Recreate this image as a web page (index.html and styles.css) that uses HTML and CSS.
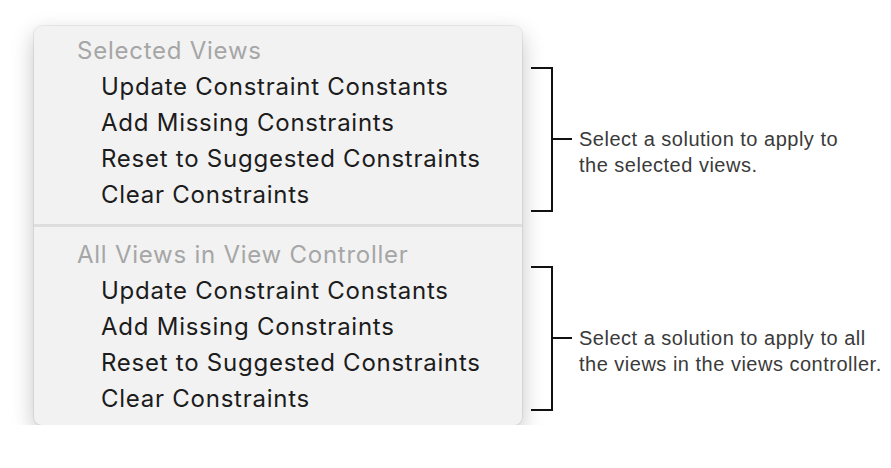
FILE: index.html
```html
<!DOCTYPE html>
<html lang="en">
<head>
    <meta charset="UTF-8">
    <meta name="viewport" content="width=device-width, initial-scale=1.0">
    <title>Resolve Auto Layout Issues</title>
    <link rel="stylesheet" href="styles.css">
</head>
<body>
    <div class="page">
        <div class="menu">
            <div class="menu-section">
                <div class="menu-header">Selected Views</div>
                <div class="menu-item">Update Constraint Constants</div>
                <div class="menu-item">Add Missing Constraints</div>
                <div class="menu-item">Reset to Suggested Constraints</div>
                <div class="menu-item">Clear Constraints</div>
            </div>
            <div class="menu-separator"></div>
            <div class="menu-section">
                <div class="menu-header">All Views in View Controller</div>
                <div class="menu-item">Update Constraint Constants</div>
                <div class="menu-item">Add Missing Constraints</div>
                <div class="menu-item">Reset to Suggested Constraints</div>
                <div class="menu-item">Clear Constraints</div>
            </div>
        </div>

        <div class="notes">
            <div class="note">
                <div class="brace"></div>
                <div class="label">
                    <div class="tick"></div>
                    <p>Select a solution to apply to<br>the selected views.</p>
                </div>
            </div>
            <div class="note">
                <div class="brace"></div>
                <div class="label">
                    <div class="tick"></div>
                    <p>Select a solution to apply to all<br>the views in the views controller.</p>
                </div>
            </div>
        </div>
    </div>
</body>
</html>
```

FILE: styles.css
```css
body {
    margin: 0;
    background: #fff;
    font-family: Inter, "Liberation Sans", sans-serif;
}

.page {
    display: flex;
    align-items: flex-start;
    padding: 26px 0 0 34px;
}

.menu {
    width: 488px;
    background: #f2f2f2;
    border-radius: 8px;
    box-shadow: 0 0 0 1px rgba(0, 0, 0, 0.06), 0 8px 22px rgba(0, 0, 0, 0.24);
}

.menu-section {
    padding: 7px 0 11px;
}

.menu-section + .menu-separator + .menu-section {
    padding: 10px 0 8px;
}

.menu-header,
.menu-item {
    height: 36px;
    line-height: 36px;
    font-size: 24px;
    letter-spacing: 0.75px;
    white-space: nowrap;
}

.menu-header {
    padding-left: 43px;
    color: #a6a6a6;
}

.menu-item {
    padding-left: 67px;
    color: #1c1c1c;
}

.menu-separator {
    height: 3px;
    background: #dedede;
}

.notes {
    display: flex;
    flex-direction: column;
    gap: 54px;
    margin: 41px 0 0 9px;
}

.note {
    display: flex;
    height: 145px;
}

.brace {
    width: 20px;
    border: 2px solid #111;
    border-left: none;
}

.label {
    display: flex;
    align-items: flex-start;
    margin-top: 59px;
}

.tick {
    width: 19px;
    height: 2px;
    margin-top: 12px;
    background: #111;
}

.label p {
    margin: 0 0 0 7px;
    font-family: "Liberation Sans", Arial, sans-serif;
    font-size: 20px;
    letter-spacing: 0.5px;
    line-height: 26px;
    color: #3a3a3a;
    white-space: nowrap;
}
```
